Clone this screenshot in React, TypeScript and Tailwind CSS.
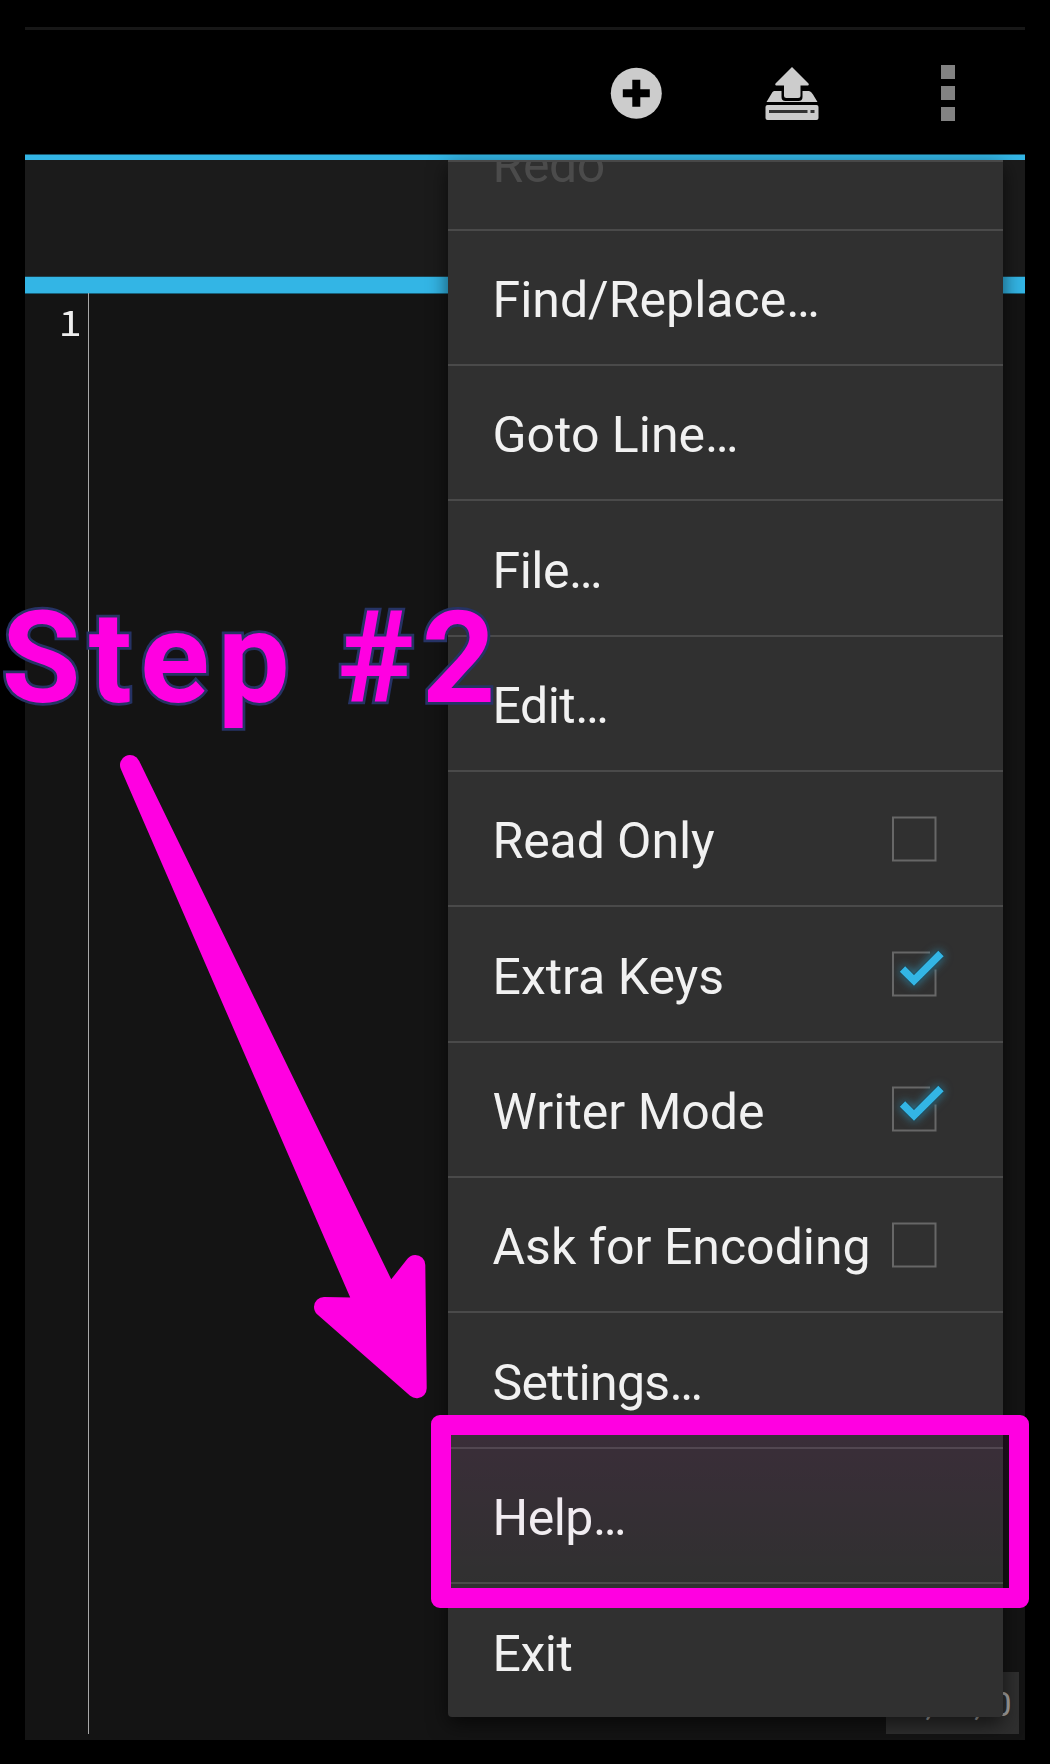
import React from "react";

type Item = { label: string; check?: boolean; tone?: string };

const items: Item[] = [
  { label: "Redo", tone: "text-[#4b4b4b] tracking-[-0.4px]" },
  { label: "Find/Replace…" },
  { label: "Goto Line…" },
  { label: "File…", tone: "text-[#f1f1f1] tracking-[-0.5px]" },
  { label: "Edit…", tone: "text-[#f1f1f1] tracking-[-0.5px]" },
  { label: "Read Only", check: false, tone: "text-[#f1f1f1] tracking-[-0.1px]" },
  { label: "Extra Keys", check: true },
  { label: "Writer Mode", check: true },
  { label: "Ask for Encoding", check: false },
  { label: "Settings…", tone: "text-[#f1f1f1] tracking-[-0.7px]" },
  { label: "Help…", tone: "text-[#f1f1f1] tracking-[-0.5px]" },
  { label: "Exit", tone: "text-[#f1f1f1] tracking-[-0.5px]" },
];

function CheckBox({ on }: { on: boolean }) {
  return (
    <svg width="46" height="46" viewBox="0 0 46 46" className="shrink-0 overflow-visible" fill="none">
      {on ? (
        <>
          <path d="M38 1.500H1V44.500H43.500V18.500" stroke="#676767" strokeWidth="2" />
          <path
            d="M10.5 18L22 29.500L49 2.500"
            stroke="#33b5e5"
            strokeWidth="7.6"
            className="[filter:drop-shadow(0_0_1px_#10303c)_drop-shadow(0_0_5px_rgba(51,181,229,0.65))]"
          />
        </>
      ) : (
        <path d="M1 1.500H43.500V44.500H1Z" stroke="#676767" strokeWidth="2" />
      )}
    </svg>
  );
}

function MenuRow({ item }: { item: Item }) {
  return (
    <li
      className={
        "flex h-[135.35px] shrink-0 items-center justify-between border-b-2 border-[#4a4a4a] pr-[65px] pl-[44.500px] text-[50px] leading-[60px] last:-mb-[2.500px] last:border-b-0 " +
        (item.tone ?? "text-[#f1f1f1]")
      }
    >
      <span className="mt-[5px] whitespace-nowrap">{item.label}</span>
      {item.check !== undefined && <CheckBox on={item.check} />}
    </li>
  );
}

export default function App() {
  return (
    <main className="relative flex h-[1764px] w-[1050px] flex-col overflow-hidden bg-black px-[25px] pt-[27px] font-['Roboto',sans-serif]">
      <header className="flex h-[133px] shrink-0 items-start justify-end border-t-3 border-b-[5px] border-t-[#171717] border-b-[#33b5e5] pr-[70px] shadow-[inset_0_-1px_#1b5b72]">
        <svg width="52" height="52" viewBox="0 0 52 52" className="mt-[37px] mr-[103px]">
          <circle cx="26.300" cy="26.300" r="25.5" fill="#cccccc" />
          <path d="M26.300 12.800V39.800M12.800 26.300H39.800" stroke="#000" strokeWidth="8" />
        </svg>
        <svg width="54" height="54" viewBox="0 0 54 54" className="mt-[37px] mr-[122px]" fill="#cccccc">
          <path d="M27 0L43.500 16.500Q44.500 18.500 42 18.500H35.500V28.500Q35.500 31 33 31H21.500Q19 31 19 28.500V18.500H12Q9.500 18.500 10.500 16.500Z" />
          <path d="M9 24H16.500V30Q16.500 34 20.500 34H33.500Q37.500 34 37.500 30V24H44Q46 24 48 27.500L52.500 35H1.500L6 27.500Q7.500 24 9 24Z" />
          <rect x="0.500" y="38" width="53" height="15" rx="2" />
          <path d="M4 44.500H42.500M45.500 44.500H49.500" stroke="#333" strokeWidth="3" />
        </svg>
        <div className="mt-[35px] flex flex-col gap-[7px]">
          <i className="size-[14px] bg-[#828282]" />
          <i className="size-[14px] bg-[#828282]" />
          <i className="size-[14px] bg-[#828282]" />
        </div>
      </header>
      <div className="h-[133px] shrink-0 border-b-[16px] border-[#33b5e5] bg-[#1b1b1b] shadow-[inset_0_-1px_#1d424f]" />
      <section className="flex h-[1447px] shrink-0 items-start bg-[#141414] shadow-[inset_0_1px_#1a6079]">
        <div className="h-[1441px] w-[64px] border-r border-[#a8a8a8] pt-[2px] pr-[6px] text-right font-['Noto_Sans_CJK_SC',sans-serif] text-[35.5px] leading-[52px] text-[#eeeeee]">
          <span className="inline-block origin-right scale-x-[1.18]">1</span>
        </div>
        <div className="mt-[1379px] mr-[6px] ml-auto h-[62px] w-[133px] bg-[#2f2f2f] pr-[7.500px] text-right text-[34px] leading-[64px] whitespace-nowrap text-[#a8a8a8] [word-spacing:3px]">
          0 , 0 , 0
        </div>
      </section>

      <div className="absolute top-[160px] left-[448px] h-[1557px] w-[555px] rounded-b-[4px] bg-[#303030] shadow-[0_7px_20px_rgba(0,0,0,0.6)]">
        <ul className="flex h-full flex-col justify-end overflow-hidden border-t-2 border-[#484848]">
          {items.map((item) => (
            <MenuRow key={item.label} item={item} />
          ))}
        </ul>
      </div>

      <div className="absolute top-[1415px] left-[431px] h-[193px] w-[598px] rounded-[9px] border-20 border-[#ff00e1]">
        <div className="h-full bg-linear-to-b from-[#ff00e1]/5 to-transparent" />
      </div>

      <svg width="340" height="660" viewBox="100 745 340 660" className="absolute top-[745px] left-[100px]">
        <path
          d="M130 765L365.600 1307.800L324 1307L416.700 1388.300L415.300 1265L389.200 1298Z"
          fill="#ff00e1"
          stroke="#ff00e1"
          strokeWidth="20"
          strokeLinejoin="round"
        />
      </svg>
      <p className="absolute top-[577.500px] left-[1.500px] text-[128.500px] leading-[160px] font-bold tracking-[8px] whitespace-nowrap text-[#ff00e1] [-webkit-text-stroke:5.500px_#263365] [paint-order:stroke_fill]">
        Step #2
      </p>
    </main>
  );
}
